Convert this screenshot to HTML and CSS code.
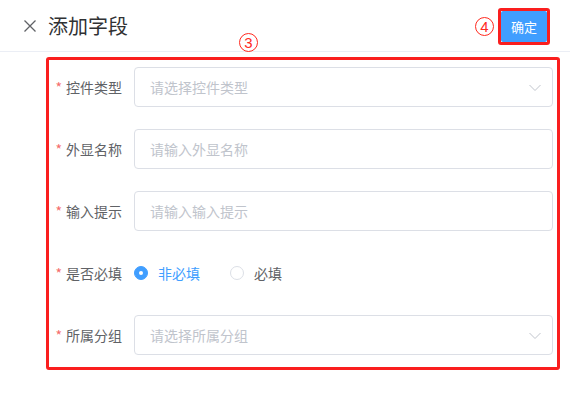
FILE: index.html
```html
<!DOCTYPE html>
<html lang="zh-CN">
  <head>
    <meta charset="UTF-8" />
    <title>添加字段</title>
    <link rel="stylesheet" href="styles.css">
  </head>
  <body>
    <div class="header">
      <svg class="close" width="12" height="12" viewBox="0 0 12 12">
        <path d="M0.5 0.5 L11.5 11.5 M11.5 0.5 L0.5 11.5" stroke="#606266" stroke-width="1.3" fill="none" />
      </svg>
      <h2 class="title">添加字段</h2>
      <span class="mark mark-3">3</span>
      <div class="actions">
        <span class="mark">4</span>
        <div class="outline">
          <button class="btn-primary">确定</button>
        </div>
      </div>
    </div>

    <!-- form area -->
    <div class="form-box">
      <div class="form-item">
        <label class="item-label"><i>*</i>控件类型</label>
        <div class="field select">
          <span class="placeholder">请选择控件类型</span>
          <svg class="arrow" width="12" height="8" viewBox="0 0 12 8">
            <path d="M0.5 1 L6 6.5 L11.5 1" stroke="#c0c4cc" stroke-width="1" fill="none" />
          </svg>
        </div>
      </div>
      <div class="form-item">
        <label class="item-label"><i>*</i>外显名称</label>
        <div class="field"><span class="placeholder">请输入外显名称</span></div>
      </div>
      <div class="form-item">
        <label class="item-label"><i>*</i>输入提示</label>
        <div class="field"><span class="placeholder">请输入输入提示</span></div>
      </div>
      <div class="form-item">
        <label class="item-label"><i>*</i>是否必填</label>
        <div class="radios">
          <span class="radio checked"><span class="dot"></span>非必填</span>
          <span class="radio"><span class="dot"></span>必填</span>
        </div>
      </div>
      <div class="form-item">
        <label class="item-label"><i>*</i>所属分组</label>
        <div class="field select">
          <span class="placeholder">请选择所属分组</span>
          <svg class="arrow" width="12" height="8" viewBox="0 0 12 8">
            <path d="M0.5 1 L6 6.5 L11.5 1" stroke="#c0c4cc" stroke-width="1" fill="none" />
          </svg>
        </div>
      </div>
    </div>
  </body>
</html>
```

FILE: styles.css
```css
body {
  margin: 0;
  font-family: "Microsoft YaHei", "Noto Sans CJK SC", "Noto Sans", sans-serif;
  background-color: #fff;
  color: #606266;
}
.header {
  position: relative;
  display: flex;
  align-items: center;
  height: 51px;
  padding: 0 20px 0 24px;
  border-bottom: 1px solid #ebeef5;
}
.close {
  display: block;
}
.title {
  margin: 0 0 0 12px;
  font-size: 20px;
  font-weight: normal;
  color: #303133;
  line-height: 1;
}
.actions {
  margin-left: auto;
  display: flex;
  align-items: center;
  gap: 4px;
  margin-top: 2px;
}
.mark {
  display: inline-flex;
  align-items: center;
  justify-content: center;
  width: 17px;
  height: 17px;
  border: 1px solid #ff2a1f;
  border-radius: 50%;
  color: #ff2a1f;
  font-family: "Liberation Sans", sans-serif;
  font-size: 15px;
  line-height: 1;
}
.mark-3 {
  position: absolute;
  left: 239px;
  top: 33px;
}
.outline {
  border: 3px solid #fa1e1e;
  border-radius: 3px;
}
.btn-primary {
  display: block;
  height: 31px;
  padding: 0 10px;
  border: none;
  border-radius: 2px;
  background-color: #409eff;
  color: #fff;
  font-family: inherit;
  font-size: 13px;
  cursor: pointer;
}
.form-box {
  width: 504px;
  margin: 5px 0 0 46px;
  padding: 7px 4px 12px 0;
  border: 3px solid #fa1e1e;
  border-radius: 3px;
  display: flex;
  flex-direction: column;
  gap: 22px;
}
.form-item {
  display: flex;
  height: 40px;
}
.item-label {
  width: 73px;
  padding-right: 12px;
  text-align: right;
  font-size: 14px;
  line-height: 40px;
  color: #606266;
}
.item-label i {
  font-style: normal;
  color: #f56c6c;
  margin-right: 4px;
}
.field {
  flex: 1;
  display: flex;
  align-items: center;
  border: 1px solid #dcdfe6;
  border-radius: 4px;
  padding: 0 11px 0 15px;
  font-size: 14px;
}
.placeholder {
  color: #c0c4cc;
}
.arrow {
  margin-left: auto;
  margin-top: 1px;
}
.radios {
  display: flex;
  align-items: center;
  font-size: 14px;
}
.radio {
  display: flex;
  align-items: center;
  margin-right: 30px;
  color: #606266;
}
.radio .dot {
  width: 12px;
  height: 12px;
  border: 1px solid #dcdfe6;
  border-radius: 50%;
  margin-right: 10px;
  position: relative;
}
.radio.checked {
  color: #409eff;
}
.radio.checked .dot {
  background-color: #409eff;
  border-color: #409eff;
}
.radio.checked .dot::after {
  content: "";
  position: absolute;
  left: 4px;
  top: 4px;
  width: 4px;
  height: 4px;
  border-radius: 50%;
  background-color: #fff;
}
```
